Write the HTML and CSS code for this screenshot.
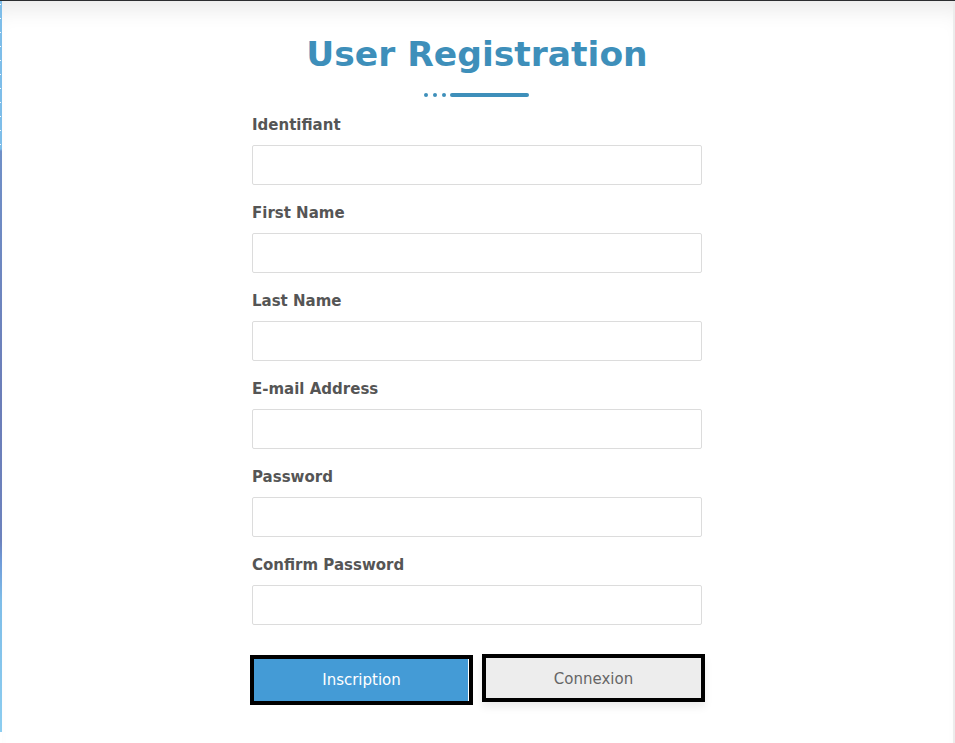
FILE: index.html
```html
<!DOCTYPE html>
<html lang="en">
<head>
<meta charset="utf-8">
<title>User Registration</title>
<link rel="stylesheet" href="styles.css">
</head>
<body>
<div class="frame">
  <div class="edge"></div>
  <main class="sheet">
    <form class="reg">
      <h1 class="title">User Registration</h1>
      <div class="divider"><span class="dot"></span><span class="dot"></span><span class="dot"></span><span class="bar"></span></div>
      <div class="field">
        <label class="lbl" for="f1">Identifiant</label>
        <input class="inp" id="f1" type="text">
      </div>
      <div class="field">
        <label class="lbl" for="f2">First Name</label>
        <input class="inp" id="f2" type="text">
      </div>
      <div class="field">
        <label class="lbl" for="f3">Last Name</label>
        <input class="inp" id="f3" type="text">
      </div>
      <div class="field">
        <label class="lbl" for="f4">E-mail Address</label>
        <input class="inp" id="f4" type="email">
      </div>
      <div class="field">
        <label class="lbl" for="f5">Password</label>
        <input class="inp" id="f5" type="password">
      </div>
      <div class="field">
        <label class="lbl" for="f6">Confirm Password</label>
        <input class="inp" id="f6" type="password">
      </div>
      <div class="actions">
        <button type="submit" class="btn btn-primary">Inscription</button>
        <button type="button" class="btn btn-secondary">Connexion</button>
      </div>
    </form>
  </main>
</div>
</body>
</html>
```
FILE: styles.css
```css
html, body {
  margin: 0;
  padding: 0;
  background: #fff;
}
body {
  width: 955px;
  height: 743px;
  overflow: hidden;
  font-family: "DejaVu Sans", Verdana, sans-serif;
}
.frame {
  display: flex;
  height: 743px;
  border-top: 1px solid #2b2d30;
  box-sizing: border-box;
}
.edge {
  width: 2px;
  flex: none;
  height: 731px;
  background:
    repeating-linear-gradient(to bottom, transparent 0 3px, rgba(255,255,255,0.9) 3px 4px, transparent 4px 14px) 0 0 / 1px 145px no-repeat,
    linear-gradient(to bottom, #7dbde9 0, #7dbde9 148px, #6f8fc7 150px, #6b7db8 400px, #6c82bd 540px, #6f9ad8 560px, #7ebde8 600px, #8ccdf0 731px);
}
.sheet {
  flex: 1;
  background: #fff;
  border-right: 2px solid #ececec;
  box-shadow: inset 0 22px 22px -14px rgba(0,0,0,0.09);
  display: flex;
  justify-content: center;
  padding-right: 1px;
}
.reg {
  width: 450px;
  padding-top: 32px;
  display: flex;
  flex-direction: column;
}
.title {
  margin: 0;
  text-align: center;
  font-family: "DejaVu Sans", Verdana, sans-serif;
  font-weight: bold;
  font-size: 34.5px;
  line-height: 42px;
  color: #3e8fba;
}
.divider {
  margin-top: 18px;
  height: 4px;
  display: flex;
  justify-content: center;
  align-items: center;
  gap: 5px;
  padding-right: 2px;
}
.dot {
  width: 4px;
  height: 4px;
  border-radius: 50%;
  background: #3e8fba;
}
.bar {
  width: 79px;
  height: 4px;
  border-radius: 2px;
  background: #3e8fba;
  margin-left: -1px;
}
.divider + .field {
  margin-top: 20px;
}
.field {
  display: flex;
  flex-direction: column;
  margin-bottom: 20px;
}
.lbl {
  font-size: 15px;
  line-height: 16px;
  font-weight: bold;
  color: #555;
  margin-bottom: 12px;
}
.inp {
  box-sizing: border-box;
  width: 450px;
  height: 40px;
  margin: 0;
  border: 1px solid #dcdcdc;
  border-radius: 2px;
  background: #fff;
  font-family: inherit;
  font-size: 15px;
  padding: 0 10px;
  outline: none;
}
.actions {
  display: flex;
  align-items: flex-start;
  gap: 9px;
  margin-left: -2px;
  margin-top: 9px;
  width: 455px;
}
.btn {
  box-sizing: border-box;
  width: 223px;
  border: 4px solid #000;
  font-family: "DejaVu Sans", Verdana, sans-serif;
  font-size: 15px;
  padding: 0;
  margin: 0;
  cursor: pointer;
}
.btn-primary {
  height: 50px;
  margin-top: 1px;
  background: #449bd6;
  color: #fff;
  box-shadow: inset -1px 0 0 #fff, inset -3px 0 0 #449bd6;
}
.btn-secondary {
  height: 48px;
  padding-top: 2px;
  background: #ededed;
  color: #666;
  box-shadow: 0 5px 8px rgba(0,0,0,0.08);
}
```
